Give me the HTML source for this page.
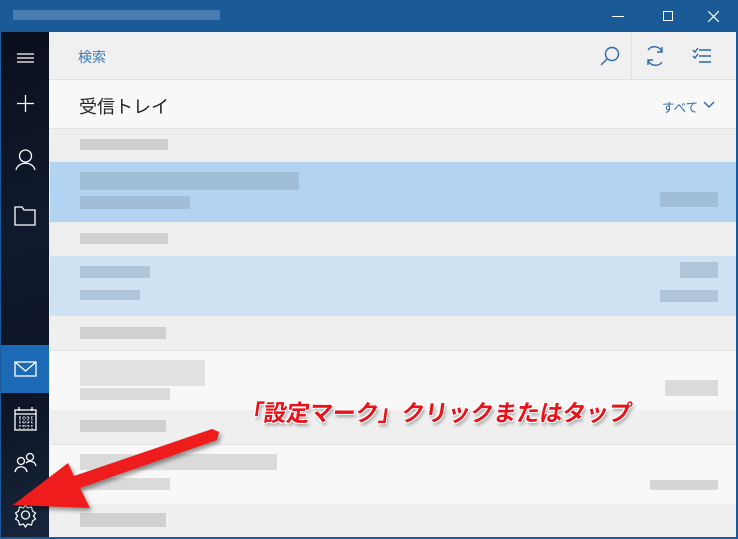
<!DOCTYPE html>
<html><head><meta charset="utf-8"><style>
*{margin:0;padding:0;box-sizing:border-box}
html,body{width:738px;height:539px;overflow:hidden}
body{background:#1a5a9a;position:relative;font-family:"Liberation Sans","Noto Sans CJK JP",sans-serif}
.a{position:absolute}
.blur{position:absolute;background:#c8c8c8;opacity:.8}
.bb{background:#90a8c0}
</style></head><body>
<div class="a" style="left:0;top:0;width:738px;height:32px;background:#1a5a96"></div>
<div class="a" style="left:13px;top:10px;width:207px;height:10px;background:#5585b8;opacity:.8"></div>
<div class="a" style="left:612px;top:16px;width:12px;height:1px;background:#fff"></div>
<div class="a" style="left:663px;top:11px;width:10px;height:10px;border:1px solid #fff"></div>
<svg class="a" style="left:708px;top:11px" width="11" height="11"><path d="M0 0L11 11M11 0L0 11" stroke="#fff" stroke-width="1.2"/></svg>
<!-- sidebar -->
<div class="a" style="left:1px;top:32px;width:48px;height:505px;background:linear-gradient(160deg,#0a0f1c,#101a2e 40%,#0c1424 70%,#17253c)"></div>
<svg class="a" style="left:1px;top:32px" width="48" height="505" fill="none" stroke="#fff" stroke-width="1.3">
<path d="M16 22H33M16 26H33M16 30H33"/>
<path d="M24.5 63V80M16 71.5H33"/>
<circle cx="24.5" cy="124" r="6"/><path d="M15 138C17 129 32 129 34 138"/>
<path d="M14 175H21L23 178H34V193H14Z"/>
</svg>
<div class="a" style="left:1px;top:345px;width:48px;height:48px;background:#1c6ab6"></div>
<svg class="a" style="left:1px;top:345px" width="48" height="200" fill="none" stroke="#fff" stroke-width="1.3">
<rect x="14" y="17" width="21" height="14"/><path d="M14 17L24.5 26L35 17"/>
<rect x="14" y="65" width="21" height="20"/><path d="M14 69H35M18 62V66M31 62V66" /><path d="M18 73H31M18 77H31M18 81H31M19 71V84M23 71V84M27 71V84M31 71V84" stroke-width="1" stroke-dasharray="1.5 1.5"/>
<circle cx="20" cy="116" r="3.5"/><path d="M14 127C15 120 25 120 26 127"/><circle cx="29" cy="112" r="3.5"/><path d="M25 118C28 115 34 116 35 121"/>
<circle cx="24.5" cy="170" r="4"/><path d="M24.5 160l2 3 4-1 1 4 3 2-2 3 2 3-3 2-1 4-4-1-2 3-2-3-4 1-1-4-3-2 2-3-2-3 3-2 1-4 4 1z" stroke-width="1.2"/>
</svg>
<!-- main -->
<div class="a" style="left:49px;top:32px;width:687px;height:48px;background:#f0f0f0;border-bottom:1px solid #e2e2e2"></div>
<div class="a" style="left:78px;top:47px;font-size:14px;color:#3a7ab8">検索</div>
<div class="a" style="left:631px;top:32px;width:1px;height:48px;background:#e0e0e0"></div>
<svg class="a" style="left:595px;top:40px" width="140" height="35" fill="none" stroke="#2a6aaa" stroke-width="1.4">
<circle cx="17" cy="14" r="6.5"/><path d="M12.5 18.5L6 25"/>
<path d="M53 10A8 8 0 0 1 67 12M67 7V12H62M67 22A8 8 0 0 1 53 20M53 25V20H58"/>
<path d="M104 10H116M104 16H116M104 22H116M98 10l2 2 3-4M98 16l2 2 3-4"/>
</svg>
<div class="a" style="left:49px;top:80px;width:687px;height:49px;background:#f8f8f8;border-bottom:1px solid #e4e4e4"></div>
<div class="a" style="left:79px;top:93px;font-size:18px;color:#222">受信トレイ</div>
<div class="a" style="left:662px;top:97px;font-size:12.5px;color:#2a6aaa">すべて</div>
<svg class="a" style="left:703px;top:101px" width="12" height="8"><path d="M1 1L6 6L11 1" fill="none" stroke="#2a6aaa" stroke-width="1.4"/></svg>
<div class="a" style="left:49px;top:129px;width:687px;height:408px;background:#efefef"></div>
<div class="a" style="left:50px;top:162px;width:686px;height:60px;background:#b3d4f0"></div>
<div class="a" style="left:50px;top:256px;width:686px;height:60px;background:#cfe2f3"></div>
<div class="a" style="left:50px;top:350px;width:686px;height:60px;background:#f8f8f8;border-top:1px solid #e4e4e4"></div>
<div class="a" style="left:50px;top:444px;width:686px;height:60px;background:#f8f8f8;border-top:1px solid #e4e4e4"></div>
<div class="blur" style="left:80px;top:139px;width:88px;height:11px"></div>
<div class="blur bb" style="left:80px;top:172px;width:219px;height:18px;opacity:.5"></div>
<div class="blur bb" style="left:80px;top:196px;width:110px;height:13px;opacity:.5"></div>
<div class="blur bb" style="left:660px;top:192px;width:58px;height:15px;opacity:.5"></div>
<div class="blur" style="left:80px;top:233px;width:88px;height:11px"></div>
<div class="blur bb" style="left:80px;top:266px;width:70px;height:12px;opacity:.5"></div>
<div class="blur bb" style="left:80px;top:290px;width:60px;height:10px;opacity:.5"></div>
<div class="blur bb" style="left:680px;top:262px;width:38px;height:16px;opacity:.5"></div>
<div class="blur bb" style="left:660px;top:290px;width:58px;height:12px;opacity:.5"></div>
<div class="blur" style="left:80px;top:327px;width:86px;height:12px"></div>
<div class="blur" style="left:80px;top:360px;width:125px;height:26px;opacity:.45"></div>
<div class="blur" style="left:80px;top:388px;width:90px;height:12px;opacity:.6"></div>
<div class="blur" style="left:665px;top:380px;width:53px;height:16px;opacity:.6"></div>
<div class="blur" style="left:80px;top:420px;width:86px;height:12px"></div>
<div class="blur" style="left:80px;top:454px;width:197px;height:16px;opacity:.6"></div>
<div class="blur" style="left:80px;top:478px;width:90px;height:12px;opacity:.6"></div>
<div class="blur" style="left:650px;top:480px;width:68px;height:10px;opacity:.7"></div>
<div class="blur" style="left:80px;top:513px;width:86px;height:14px"></div>
<!-- annotation -->
<div class="a" style="left:241px;top:394px;font-size:23px;font-weight:bold;color:#e8121a;transform:skewX(-8deg);white-space:nowrap;letter-spacing:0;text-shadow:1px 1px 0 #fff,-1px -1px 0 #fff,1px -1px 0 #fff,-1px 1px 0 #fff,2px 3px 3px rgba(0,0,0,.35)">「設定マーク」クリックまたはタップ</div>
<svg class="a" style="left:0;top:420px;filter:drop-shadow(2px 3px 2px rgba(0,0,0,.4))" width="230" height="100">
<path d="M219 12L217 20L80 68L90 88L13 85L68 43L74 56L212 9Z" fill="#ee1c1c"/>
</svg>
</body></html>
